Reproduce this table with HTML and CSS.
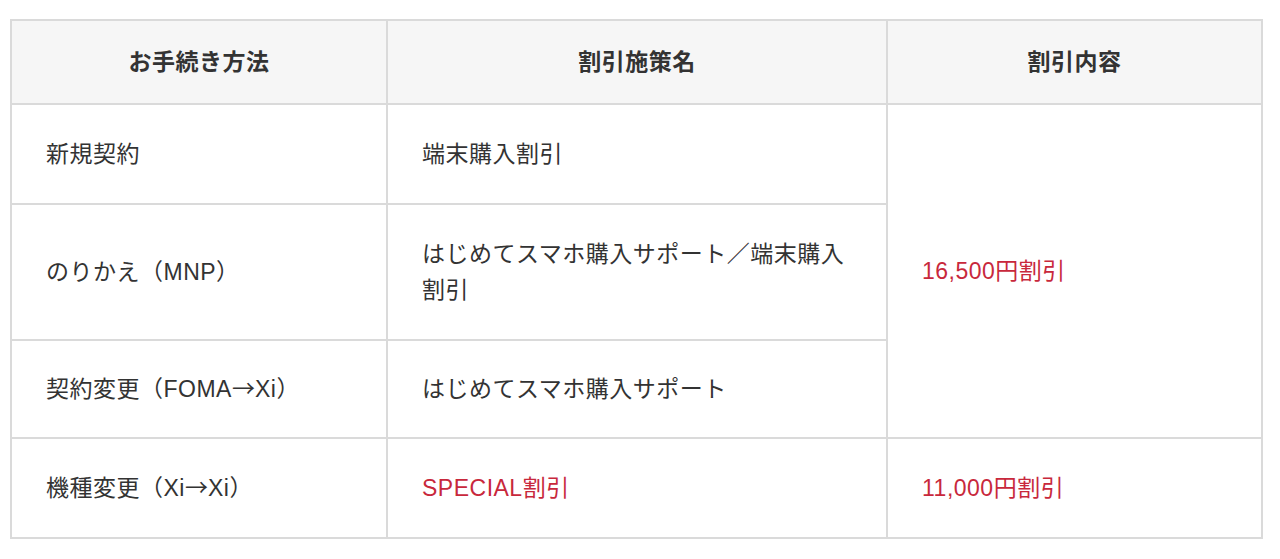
FILE: index.html
```html
<!DOCTYPE html>
<html lang="ja">
<head>
<meta charset="utf-8">
<link rel="stylesheet" href="styles.css">
</head>
<body>
<div class="wrap">
<table class="price">
  <colgroup><col class="c1"><col class="c2"><col class="c3"></colgroup>
  <thead>
    <tr><th>お手続き方法</th><th>割引施策名</th><th>割引内容</th></tr>
  </thead>
  <tbody>
    <tr class="r1"><td>新規契約</td><td>端末購入割引</td><td rowspan="3" class="red">16,500円割引</td></tr>
    <tr class="r2"><td>のりかえ（MNP）</td><td>はじめてスマホ購入サポート／端末購入割引</td></tr>
    <tr class="r3"><td>契約変更（FOMA<span class="arw">→</span>Xi）</td><td>はじめてスマホ購入サポート</td></tr>
    <tr class="r4"><td>機種変更（Xi<span class="arw">→</span>Xi）</td><td class="red">SPECIAL割引</td><td class="red">11,000円割引</td></tr>
  </tbody>
</table>
</div>
</body>
</html>
```
FILE: styles.css
```css
html, body { margin: 0; padding: 0; background: #fff; }
.wrap { padding: 19px 0 0 10px; }
.price {
  width: 1251px;
  border-collapse: collapse;
  table-layout: fixed;
  font-family: "Liberation Sans", "Noto Sans CJK JP", sans-serif;
  font-size: 23px;
  line-height: 36px;
  letter-spacing: 0.5px;
  color: #333;
}
.c1 { width: 376px; }
.c2 { width: 500px; }
.c3 { width: 375px; }
.price th, .price td {
  border: 2px solid #dadada;
  vertical-align: middle;
}
.price th {
  background: #f6f6f6;
  font-weight: bold;
  text-align: center;
  padding: 23px 10px;
}
.price td {
  text-align: left;
  padding: 31px 34px 31px 34px;
}
.price .r3 td { padding-top: 30px; padding-bottom: 30px; }
.price .red { color: #c8283c; }
.arw {
  font-family: "Noto Sans CJK JP", sans-serif;
  line-height: 1;
  letter-spacing: 0;
}
```
